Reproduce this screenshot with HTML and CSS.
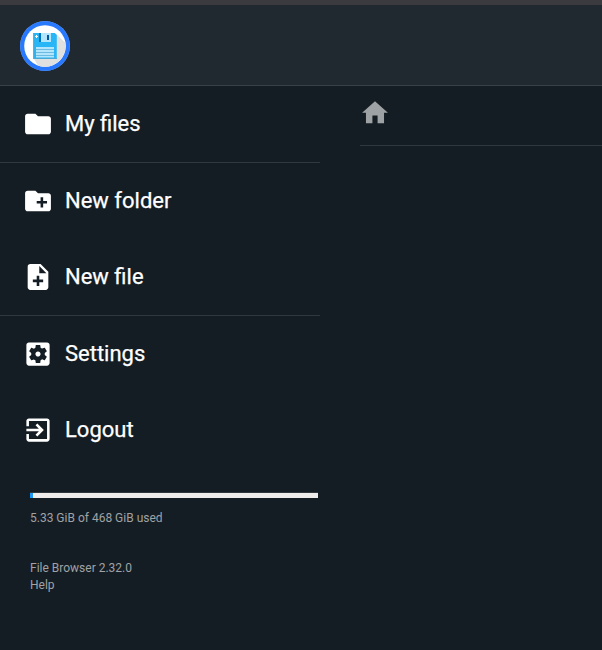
FILE: index.html
```html
<!DOCTYPE html>
<html lang="en">
<head>
<meta charset="utf-8">
<title>File Browser</title>
<link rel="stylesheet" href="styles.css">
</head>
<body>
<header class="header">
  <svg class="logo" viewBox="0 0 50 50">
    <circle cx="25" cy="25" r="25" fill="#6fa5f8"/>
    <circle cx="25" cy="25" r="24.8" fill="#2979ff"/>
    <circle cx="25" cy="25" r="20.8" fill="#fff"/>
    <path d="M36 13L45.300 21.500A20.800 20.800 0 0 1 18 44.600L14 38z" fill="#e0e0e0"/>
    <path d="M13.300 12h21.500l2 2v24H13.300z" fill="#29b6f6"/>
    <path d="M13.300 12h1v26h-1zM13.300 37h23.500v1H13.300z" fill="#4aa9d4"/>
    <path d="M19 12h3v9h-3z" fill="#0277bd"/>
    <path d="M21 12h10v9H21z" fill="#b3e5fc"/>
    <path d="M27 14h2v5h-2z" fill="#01579b"/>
    <path d="M15 15.500h3M16.500 14v3" stroke="#fff"/>
    <path d="M16 26h18v10.500H16z" fill="#b3e5fc"/>
    <path d="M16 28.500h18M16 31.500h18M16 34.500h18" stroke="#6dbbe0"/>
  </svg>
</header>
<div class="layout">
  <nav class="sidebar">
    <div class="group">
      <a class="action"><svg class="icon" viewBox="0 0 24 24"><path d="M10 4H4c-1.100 0-1.990.9-1.990 2L2 18c0 1.100.9 2 2 2h16c1.100 0 2-.9 2-2V8c0-1.100-.9-2-2-2h-8l-2-2z"/></svg><span>My files</span></a>
    </div>
    <div class="group">
      <a class="action"><svg class="icon" viewBox="0 0 24 24"><path d="M20 6h-8l-2-2H4c-1.110 0-1.990.89-1.990 2L2 18c0 1.110.89 2 2 2h16c1.110 0 2-.89 2-2V8c0-1.110-.89-2-2-2zm-1 8h-3v3h-2v-3h-3v-2h3V9h2v3h3v2z"/></svg><span>New folder</span></a>
      <a class="action"><svg class="icon" viewBox="0 0 24 24"><path d="M14 2H6c-1.100 0-1.990.9-1.990 2L4 20c0 1.100.89 2 1.990 2H18c1.100 0 2-.9 2-2V8l-6-6zm2 14h-3v3h-2v-3H8v-2h3v-3h2v3h3v2zm-3-7V3.500L18.500 9H13z"/></svg><span>New file</span></a>
    </div>
    <div class="group">
      <a class="action"><svg class="icon" viewBox="0 0 24 24"><path d="M12 10c-1.100 0-2 .9-2 2s.9 2 2 2 2-.9 2-2-.9-2-2-2zm7-7H5c-1.110 0-2 .9-2 2v14c0 1.100.89 2 2 2h14c1.110 0 2-.9 2-2V5c0-1.100-.89-2-2-2zm-1.750 9c0 .23-.02.46-.05.68l1.480 1.160c.13.110.17.300.08.450l-1.400 2.420c-.09.150-.27.210-.43.150l-1.740-.7c-.36.280-.76.510-1.180.69l-.26 1.850c-.03.170-.18.300-.35.300h-2.800c-.17 0-.32-.13-.35-.29l-.26-1.850c-.43-.18-.82-.41-1.180-.69l-1.740.7c-.16.060-.34 0-.43-.15l-1.400-2.420c-.09-.15-.05-.34.080-.45l1.480-1.160c-.03-.23-.05-.46-.05-.69s.02-.46.050-.68l-1.480-1.160c-.13-.11-.17-.30-.08-.45l1.400-2.420c.09-.15.270-.21.430-.15l1.740.7c.36-.28.760-.51 1.180-.69l.26-1.850c.03-.17.180-.30.350-.30h2.800c.17 0 .32.130.350.290l.26 1.850c.43.180.82.410 1.180.69l1.740-.7c.16-.06.340 0 .43.150l1.400 2.420c.09.150.050.340-.08.450l-1.480 1.160c.03.230.050.460.050.690z"/></svg><span>Settings</span></a>
      <a class="action"><svg class="icon" viewBox="0 0 24 24"><path d="M10.090 15.590L11.500 17l5-5-5-5-1.410 1.410L12.670 11H3v2h9.670l-2.580 2.590zM19 3H5c-1.110 0-2 .9-2 2v4h2V5h14v14H5v-4H3v4c0 1.100.89 2 2 2h14c1.100 0 2-.9 2-2V5c0-1.100-.9-2-2-2z"/></svg><span>Logout</span></a>
    </div>
    <div class="usage">
      <div class="bar"><div class="fill"></div></div>
      <div>5.33 GiB of 468 GiB used</div>
    </div>
    <div class="credits"><div>File Browser 2.32.0</div><div>Help</div></div>
  </nav>
  <main class="main">
    <div class="breadcrumbs"><svg class="icon home" viewBox="0 0 24 24"><path d="M10 20v-6h4v6h5v-8h3L12 3 2 12h3v8z"/></svg></div>
  </main>
</div>
</body>
</html>
```
FILE: styles.css
```css
* { box-sizing: border-box; }
body {
  margin: 0;
  height: 650px;
  overflow: hidden;
  background: #141d24;
  color: #fff;
  font-family: Roboto, sans-serif;
}
.header {
  height: 86px;
  padding: 16px 20px 0;
  border-top: 5px solid #3b3a3f;
  border-bottom: 1px solid #394147;
  background: #20292f;
}
.logo { display: block; width: 50px; height: 50px; }
.layout { display: flex; }
.sidebar { width: 320px; flex: none; }
.group + .group { border-top: 1px solid #30383e; }
.action {
  display: flex;
  align-items: center;
  height: 76px;
  padding: 0 0 1px 23px;
  font-size: 22px;
  -webkit-text-stroke: 0.250px #fff;
}
.action span { margin-left: 11px; padding-bottom: 1px; }
.icon {
  display: block;
  width: 31px;
  height: 31px;
  fill: currentColor;
  transform: translate(-0.5px, 0.5px);
}
.icon.home { transform: translate(-0.5px, -0.7px); }
.usage {
  margin: 24px 2px 0 30px;
  font-size: 12px;
  line-height: 16px;
  color: #a0a2a4;
}
.bar {
  height: 6px;
  margin-bottom: 12px;
  border-top: 1px solid #30383e;
  background: #eeedec;
}
.fill { width: 3px; height: 5px; background: #2196f3; }
.credits {
  margin: 34px 0 0 30px;
  font-size: 12px;
  line-height: 17px;
  color: #a0a2a4;
}
.main { flex: 1; padding-left: 40px; }
.breadcrumbs {
  height: 60px;
  padding-top: 12px;
  border-bottom: 1px solid #30383e;
  color: #9fa2a4;
}
```
